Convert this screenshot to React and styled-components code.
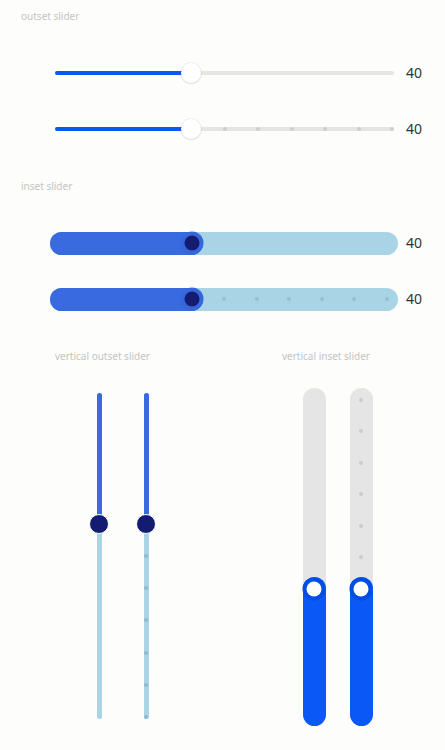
import React from 'react';
import styled, { createGlobalStyle } from 'styled-components';

const BLUE = '#0a59f7';
const ROYAL = '#3a6ae0';
const SKY = '#a8d4e6';
const NAVY = '#141c72';
const GREY = '#e5e5e5';

const GlobalStyle = createGlobalStyle`
    body {
        margin: 0;
        background: #fdfdfb;
        font-family: "Noto Sans", "Liberation Sans", sans-serif;
    }
`

const Page = styled.div`
    width: 445px;
    padding-top: 10px;
`

const Section = styled.section`
    display: flex;
    flex-direction: column;
    margin-bottom: 31px;
`

const Caption = styled.div`
    font-size: 10px;
    line-height: 12px;
    height: 12px;
    color: #c4c4c4;
    padding-left: ${p => p.$indent ?? 21}px;
    white-space: nowrap;
`

const RowList = styled.div`
    display: flex;
    flex-direction: column;
    gap: 16px;
    margin-top: 31px;
`

const Row = styled.div`
    display: flex;
    align-items: center;
    height: 40px;
    padding-left: ${p => p.$indent}px;
    gap: ${p => p.$gap}px;
`

const Value = styled.span`
    font-size: 14px;
    color: #333;
    line-height: 1;
`

/* horizontal outset */
const OutTrack = styled.div`
    position: relative;
    width: 339px;
    height: 4px;
    border-radius: 2px;
    background: ${GREY};
`

const OutFill = styled.div`
    position: absolute;
    left: 0;
    top: 0;
    bottom: 0;
    border-radius: 2px;
    background: ${BLUE};
`

const OutThumb = styled.div`
    position: absolute;
    top: 50%;
    width: 20px;
    height: 20px;
    border-radius: 50%;
    background: #fff;
    transform: translate(-50%, -50%);
    box-shadow: 0 0 0 1px rgba(0, 0, 0, 0.05), 0 1px 2px rgba(0, 0, 0, 0.08);
`

const Dot = styled.div`
    position: absolute;
    width: 4px;
    height: 4px;
    border-radius: 50%;
    background: ${p => p.$color};
    transform: translate(-50%, -50%);
    ${p => p.$vertical ? 'left: 50%;' : 'top: 50%;'}
`

/* horizontal inset */
const InTrack = styled.div`
    position: relative;
    width: 348px;
    height: 23px;
    border-radius: 11.5px;
    background: ${SKY};
`

const InFill = styled.div`
    position: absolute;
    left: 0;
    top: 0;
    bottom: 0;
    border-radius: 11.5px;
    background: ${ROYAL};
`

const InThumb = styled.div`
    position: absolute;
    top: 50%;
    width: 15px;
    height: 15px;
    border-radius: 50%;
    background: ${NAVY};
    transform: translate(-50%, -50%);
    box-shadow: 0 0 0 4px #3566dc;
`

/* vertical */
const Columns = styled.div`
    display: flex;
    align-items: flex-start;
`

const Column = styled.div`
    display: flex;
    flex-direction: column;
    width: ${p => p.$width}px;
`

const SliderPair = styled.div`
    display: flex;
    gap: ${p => p.$gap}px;
    margin-top: ${p => p.$top}px;
    padding-left: ${p => p.$indent}px;
`

const VOutTrack = styled.div`
    position: relative;
    width: 5px;
    height: 326px;
    border-radius: 2.5px;
    background: ${SKY};
    margin: 0 7.5px;
`

const VOutFill = styled.div`
    position: absolute;
    left: 0;
    right: 0;
    top: 0;
    border-radius: 2.5px;
    background: ${ROYAL};
`

const VOutThumb = styled.div`
    position: absolute;
    left: 50%;
    width: 20px;
    height: 20px;
    border-radius: 50%;
    background: ${NAVY};
    border: 1px solid #fff;
    box-sizing: border-box;
    transform: translate(-50%, -50%);
`

const VInTrack = styled.div`
    position: relative;
    width: 23px;
    height: 338px;
    border-radius: 11.5px;
    background: ${GREY};
`

const VInFill = styled.div`
    position: absolute;
    left: 0;
    right: 0;
    bottom: 0;
    border-radius: 11.5px;
    background: ${BLUE};
`

const VInThumb = styled.div`
    position: absolute;
    left: 50%;
    width: 15px;
    height: 15px;
    border-radius: 50%;
    background: #fff;
    transform: translate(-50%, 50%);
    box-shadow: 0 0 0 4px #004ee6;
`

const steps = [1, 2, 3, 4, 5, 6, 7, 8, 9, 10];

function OutsetSlider({ value, stepped }) {
    return (
        <OutTrack>
            {stepped && steps.map(k =>
                <Dot key={k} $color="#cfcfcf" style={{ left: `calc(${k * 10}% + ${2 - k * 0.4}px)` }} />
            )}
            <OutFill style={{ width: `${value}%` }} />
            <OutThumb style={{ left: `${value}%` }} />
        </OutTrack>
    )
}

function InsetSlider({ value, stepped }) {
    return (
        <InTrack>
            {stepped && steps.map(k =>
                <Dot key={k} $color="#95c0d2" style={{ left: `calc(${k * 10}% + ${11.5 - k * 2.3}px)` }} />
            )}
            <InFill style={{ width: `calc(${value}% + ${23 - value * 0.23}px)` }} />
            <InThumb style={{ left: `calc(${value}% + ${11.5 - value * 0.23}px)` }} />
        </InTrack>
    )
}

function VerticalOutset({ value, stepped }) {
    return (
        <VOutTrack>
            {stepped && steps.map(k =>
                <Dot key={k} $vertical $color="#8cbbd0" style={{ top: `calc(${k * 10}% + ${2 - k * 0.4}px)` }} />
            )}
            <VOutFill style={{ height: `${value}%` }} />
            <VOutThumb style={{ top: `calc(${value}% + 1px)` }} />
        </VOutTrack>
    )
}

function VerticalInset({ value, stepped }) {
    return (
        <VInTrack>
            {stepped && [0, 1, 2, 3, 4, 5, 6, 7, 8, 9].map(k =>
                <Dot key={k} $vertical $color="#cccccc" style={{ top: `calc(${k * 10}% + ${11.5 - k * 2.3}px)` }} />
            )}
            <VInFill style={{ height: `calc(${value}% + ${23 - value * 0.23}px)` }} />
            <VInThumb style={{ bottom: `calc(${value}% + ${11.5 - value * 0.23}px)` }} />
        </VInTrack>
    )
}

export default function App() {
    const value = 40;

    return (
        <Page>
            <GlobalStyle />
            <Section>
                <Caption>outset slider</Caption>
                <RowList>
                    <Row $indent={55} $gap={12}>
                        <OutsetSlider value={value} />
                        <Value>{value}</Value>
                    </Row>
                    <Row $indent={55} $gap={12}>
                        <OutsetSlider value={value} stepped />
                        <Value>{value}</Value>
                    </Row>
                </RowList>
            </Section>
            <Section>
                <Caption>inset slider</Caption>
                <RowList>
                    <Row $indent={50} $gap={8}>
                        <InsetSlider value={value} />
                        <Value>{value}</Value>
                    </Row>
                    <Row $indent={50} $gap={8}>
                        <InsetSlider value={value} stepped />
                        <Value>{value}</Value>
                    </Row>
                </RowList>
            </Section>
            <Columns>
                <Column $width={282}>
                    <Caption $indent={55}>vertical outset slider</Caption>
                    <SliderPair $gap={27} $top={31} $indent={89}>
                        <VerticalOutset value={value} />
                        <VerticalOutset value={value} stepped />
                    </SliderPair>
                </Column>
                <Column $width={163}>
                    <Caption $indent={0}>vertical inset slider</Caption>
                    <SliderPair $gap={24} $top={26} $indent={20.5}>
                        <VerticalInset value={value} />
                        <VerticalInset value={value} stepped />
                    </SliderPair>
                </Column>
            </Columns>
        </Page>
    )
}
